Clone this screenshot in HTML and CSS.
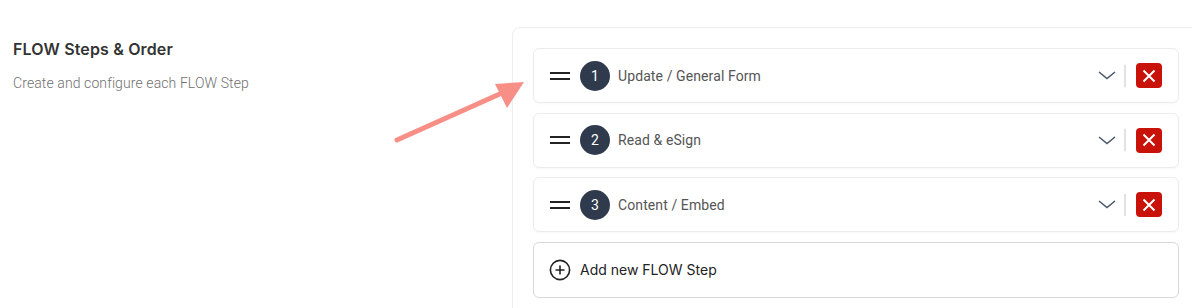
FILE: index.html
```html
<!DOCTYPE html>
<html lang="en">
<head>
    <meta charset="UTF-8">
    <meta name="viewport" content="width=device-width, initial-scale=1.0">
    <title>FLOW Steps &amp; Order</title>
    <link rel="stylesheet" href="styles.css">
</head>
<body>
    <div class="page">
        <div class="intro">
            <h2>FLOW Steps &amp; Order</h2>
            <p>Create and configure each FLOW Step</p>
        </div>

        <div class="panel">
            <div class="step">
                <span class="handle"></span>
                <span class="num">1</span>
                <span class="step-name">Update / General Form</span>
                <span class="chevron">
                    <svg width="18" height="9" viewBox="0 0 18 9"><path d="M1 1 L9 7.5 L17 1" fill="none" stroke="#4a5568" stroke-width="1.5"/></svg>
                </span>
                <span class="divider"></span>
                <span class="remove">
                    <svg width="14" height="14" viewBox="0 0 14 14"><path d="M1.5 1.5 L12.5 12.5 M12.5 1.5 L1.5 12.5" stroke="#fff" stroke-width="2"/></svg>
                </span>
            </div>

            <div class="step">
                <span class="handle"></span>
                <span class="num">2</span>
                <span class="step-name">Read &amp; eSign</span>
                <span class="chevron">
                    <svg width="18" height="9" viewBox="0 0 18 9"><path d="M1 1 L9 7.5 L17 1" fill="none" stroke="#4a5568" stroke-width="1.5"/></svg>
                </span>
                <span class="divider"></span>
                <span class="remove">
                    <svg width="14" height="14" viewBox="0 0 14 14"><path d="M1.5 1.5 L12.5 12.5 M12.5 1.5 L1.5 12.5" stroke="#fff" stroke-width="2"/></svg>
                </span>
            </div>

            <div class="step">
                <span class="handle"></span>
                <span class="num">3</span>
                <span class="step-name">Content / Embed</span>
                <span class="chevron">
                    <svg width="18" height="9" viewBox="0 0 18 9"><path d="M1 1 L9 7.5 L17 1" fill="none" stroke="#4a5568" stroke-width="1.5"/></svg>
                </span>
                <span class="divider"></span>
                <span class="remove">
                    <svg width="14" height="14" viewBox="0 0 14 14"><path d="M1.5 1.5 L12.5 12.5 M12.5 1.5 L1.5 12.5" stroke="#fff" stroke-width="2"/></svg>
                </span>
            </div>

            <div class="add-step">
                <svg class="plus" width="22" height="22" viewBox="0 0 22 22">
                    <circle cx="11" cy="11" r="9.6" fill="none" stroke="#222" stroke-width="1.6"/>
                    <path d="M11 6.5 V15.5 M6.5 11 H15.5" stroke="#222" stroke-width="1.6"/>
                </svg>
                <span>Add new FLOW Step</span>
            </div>
        </div>
    </div>

    <!-- annotation arrow -->
    <svg class="arrow" width="140" height="70" viewBox="0 0 140 70">
        <path d="M8 64 L113 17" stroke="#f78f87" stroke-width="5" stroke-linecap="round" fill="none"/>
        <polygon points="106,8 135,6 118,32" fill="#f78f87"/>
    </svg>
</body>
</html>
```

FILE: styles.css
```css
body {
    margin: 0;
    background: #fff;
    overflow: hidden;
    font-family: Roboto, Arial, sans-serif;
}

.page {
    display: flex;
    align-items: flex-start;
    padding-top: 27px;
}

.intro {
    width: 512px;
    flex-shrink: 0;
    box-sizing: border-box;
    padding: 10px 13px 0;
}

.intro h2 {
    margin: 0;
    font-family: Inter, Arial, sans-serif;
    font-size: 16px;
    font-weight: 600;
    line-height: 24px;
    letter-spacing: 0.15px;
    color: #333;
}

.intro p {
    margin: 12px 0 0;
    font-size: 14px;
    font-weight: 300;
    line-height: 20px;
    letter-spacing: 0.1px;
    color: #707070;
}

.panel {
    width: 688px;
    flex-shrink: 0;
    box-sizing: border-box;
    border: 1px solid #eeeeee;
    border-radius: 8px;
    padding: 20px;
    display: flex;
    flex-direction: column;
    gap: 9.5px;
}

.step {
    height: 55px;
    box-sizing: border-box;
    border: 1px solid #ececec;
    border-radius: 6px;
    box-shadow: 0 1px 2px rgba(0,0,0,0.03);
    padding: 0 16px;
    display: flex;
    align-items: center;
}

.handle {
    width: 20px;
    height: 8px;
    box-sizing: border-box;
    border-top: 2px solid #222;
    border-bottom: 2px solid #222;
    margin-right: 10px;
}

.num {
    width: 30px;
    height: 30px;
    border-radius: 50%;
    background: #2f3b4c;
    color: #fff;
    font-size: 14px;
    display: flex;
    align-items: center;
    justify-content: center;
    margin-right: 8px;
}

.step-name {
    flex: 1;
    font-size: 14px;
    letter-spacing: 0.1px;
    color: #555;
}

.chevron {
    display: flex;
    margin-right: 8px;
}

.divider {
    width: 2px;
    height: 22px;
    background: #e2e2e2;
    margin-right: 10px;
}

.remove {
    width: 26px;
    height: 25px;
    border-radius: 4px;
    background: #c9120a;
    display: flex;
    align-items: center;
    justify-content: center;
}

.add-step {
    height: 56px;
    box-sizing: border-box;
    border: 1px solid #d9d9d9;
    border-radius: 6px;
    padding: 0 15px;
    display: flex;
    align-items: center;
    gap: 9px;
    font-family: Inter, Arial, sans-serif;
    font-size: 14px;
    color: #222;
}

.plus {
    display: block;
}

.arrow {
    position: absolute;
    left: 389px;
    top: 76px;
}
```
